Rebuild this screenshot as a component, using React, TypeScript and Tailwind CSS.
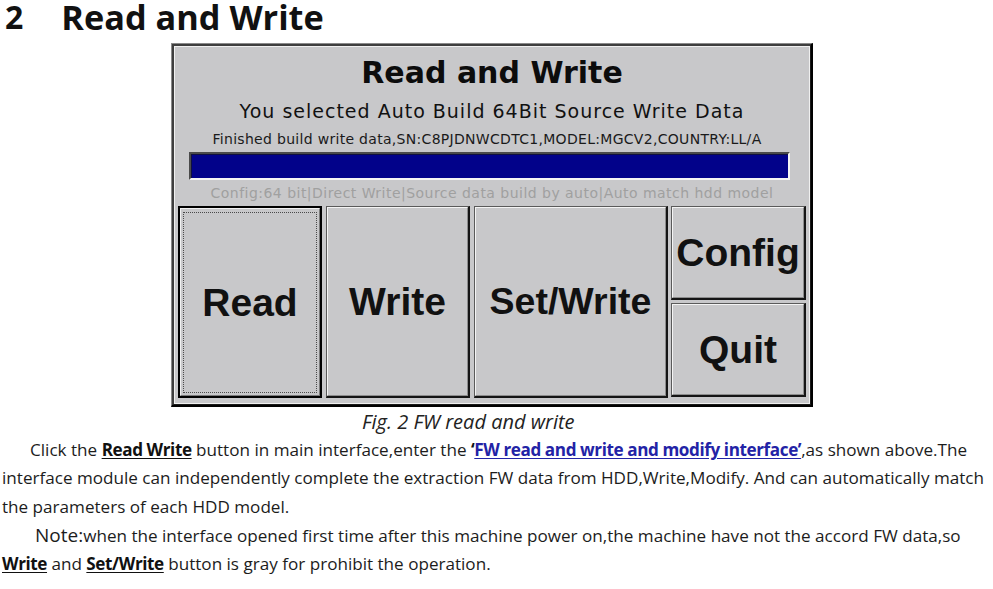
import React from "react";

const doc = { fontFamily: '"Open Sans", "Noto Sans", sans-serif' };
const ui = { fontFamily: '"DejaVu Sans", Verdana, sans-serif' };
const btnFont = { fontFamily: '"Liberation Sans", Arial, sans-serif' };

function CeButton({
  label,
  className,
  focused,
  size = "text-[39px]",
}: {
  label: string;
  className: string;
  focused?: boolean;
  size?: string;
}) {
  if (focused) {
    return (
      <div className={`${className} border-2 border-black flex`}>
        <div className="flex-1 flex border-t border-l border-t-[#f2f2f2] border-l-[#f2f2f2] border-r border-b border-r-[#7a7a7a] border-b-[#7a7a7a] p-[2px] pt-[3px]">
          <div className="flex-1 flex items-center justify-center border border-dotted border-[#4a4a4a]">
            <span className={`${size} font-bold text-[#111] leading-none`} style={btnFont}>
              {label}
            </span>
          </div>
        </div>
      </div>
    );
  }
  return (
    <div
      className={`${className} flex border border-[#5a5a5a] border-r-2 border-b-2 border-r-[#151515] border-b-[#151515]`}
    >
      <div className="flex-1 flex items-center justify-center border-t border-l border-t-[#f4f4f4] border-l-[#f4f4f4] border-r border-b border-r-[#8c8c8c] border-b-[#8c8c8c]">
        <span className={`${size} font-bold text-[#111] leading-none`} style={btnFont}>
          {label}
        </span>
      </div>
    </div>
  );
}

function Panel() {
  return (
    <div className="w-[642px] h-[364px] flex border-t border-l border-t-[#8a8a8a] border-l-[#8a8a8a] border-r-2 border-b-2 border-r-black border-b-black">
      <div className="flex-1 flex border-t-2 border-l-2 border-t-[#3e3e3e] border-l-[#3e3e3e] border-r border-b border-r-[#1a1a1a] border-b-[#1a1a1a]">
        <div className="flex-1 flex flex-col border border-[#f0f0f0] bg-[#c8c8ca]" style={ui}>
          <div className="mt-[10px] leading-[32px] text-[30px] font-bold text-center text-[#0c0c0c]">
            Read and Write
          </div>
          <div className="mt-[9px] leading-[26px] text-[19px] tracking-[1px] text-center text-[#111]">
            You selected Auto Build 64Bit Source Write Data
          </div>
          <div className="mt-[5px] pr-[10px] leading-[20px] text-[14px] tracking-[0.3px] text-center text-[#1a1a1a]">
            Finished build write data,SN:C8PJDNWCDTC1,MODEL:MGCV2,COUNTRY:LL/A
          </div>
          <div className="mt-[3px] ml-[14px] w-[601px] h-[28px] flex border-t-2 border-l-2 border-t-[#4a4a4a] border-l-[#4a4a4a] border-r-2 border-b-2 border-r-[#f4f4f4] border-b-[#f4f4f4]">
            <div className="flex-1 bg-[#02028a] border-t border-l border-t-[#101040] border-l-[#101040]" />
          </div>
          <div className="mt-[2px] leading-[22px] text-[14px] tracking-[0.47px] text-center text-[#a0a0a0]">
            Config:64 bit|Direct Write|Source data build by auto|Auto match hdd model
          </div>
          <div className="mt-[2px] h-[192px] flex pl-[3px] pr-[3px]">
            <CeButton label="Read" className="w-[144px]" focused />
            <CeButton label="Write" className="w-[144px] ml-[4px]" />
            <CeButton label="Set/Write" className="w-[194px] ml-[4px]" size="text-[37.5px]" />
            <div className="w-[135px] ml-[3px] flex flex-col">
              <CeButton label="Config" className="h-[94px]" />
              <CeButton label="Quit" className="h-[94px] mt-[3px]" />
            </div>
          </div>
        </div>
      </div>
    </div>
  );
}

function U({ children, blue }: { children: React.ReactNode; blue?: boolean }) {
  return (
    <span
      className={`font-bold tracking-[-0.4px] underline underline-offset-[2px] ${blue ? "text-[#2323a6]" : "text-[#111]"}`}
    >
      {children}
    </span>
  );
}

export default function App() {
  return (
    <div className="w-[993px] h-[589px] bg-white overflow-hidden text-[#1c1c1c]" style={doc}>
      <div className="h-[43px] pt-[1px] flex items-start">
        <span className="ml-[5px] text-[32px] leading-[32px] font-bold text-[#111]">2</span>
        <span className="ml-[38px] text-[34.3px] leading-[32px] font-bold text-[#111]">Read and Write</span>
      </div>
      <div className="pl-[171px]">
        <Panel />
      </div>
      <div className="mt-[3px] h-[24px] leading-[24px] pl-[362px] text-[20px] italic text-[#222]">
        Fig. 2 FW read and write
      </div>
      <div className="text-[17.1px] leading-[28.3px] whitespace-nowrap mt-[2px]">
        <div className="pl-[30px]">
          Click the <U>Read Write</U> button in main interface,enter the{" "}
          <span className="font-bold tracking-[-0.4px] text-[#111]">‘</span>
          <U blue>FW read and write and modify interface’</U>,as shown above.The
        </div>
        <div className="pl-[2px]">
          interface module can independently complete the extraction FW data from HDD,Write,Modify. And can automatically match
        </div>
        <div className="pl-[2px]">the parameters of each HDD model.</div>
        <div className="pl-[35px]">
          <span className="text-[19px]">Note:</span>when the interface opened first time after this machine power on,the machine have not the accord FW data,so
        </div>
        <div className="pl-[2px]">
          <U>Write</U> and <U>Set/Write</U> button is gray for prohibit the operation.
        </div>
      </div>
    </div>
  );
}
